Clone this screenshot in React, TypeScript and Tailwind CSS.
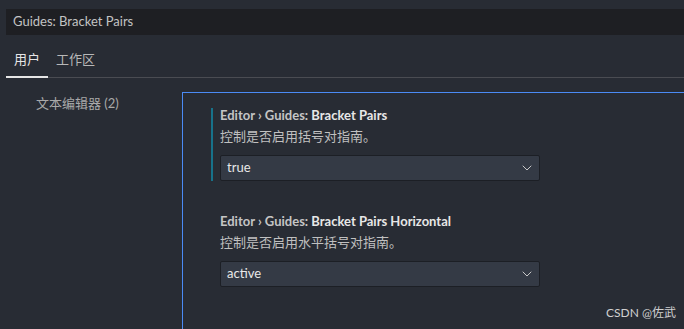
import { ChevronDown } from 'lucide-react';

const font = { fontFamily: 'Lato, "Noto Sans CJK SC", sans-serif' };

function SettingRow({
  category,
  name,
  description,
  value,
  modified,
}: {
  category: string;
  name: string;
  description: string;
  value: string;
  modified?: boolean;
}) {
  return (
    <div className={`flex ${modified ? 'border-l-2 border-[#17728a]' : 'border-l-2 border-transparent'}`}>
      <div className="pl-[7px] -mt-[2px]">
        <div className="text-[13px] leading-[18px] font-bold text-[#c5c5c5]">
          {category} › Guides: <span className="text-[#e7e7e7]">{name}</span>
        </div>
        <div className="text-[13px] leading-[18px] mt-[3px] text-[#c0c0c0]">{description}</div>
        <div className="mt-[10px] w-[320px] h-[26px] flex items-center justify-between bg-[#343a45] border border-[#1c1f25] rounded-[2px] pl-[6px] pr-[4px]">
          <span className="text-[13px] text-[#e8e8e8]">{value}</span>
          <ChevronDown className="h-4 w-4 text-[#c8c8c8]" strokeWidth={1.5} />
        </div>
      </div>
    </div>
  );
}

export default function App() {
  return (
    <div className="relative w-[684px] h-[329px] overflow-hidden bg-[#282c34]" style={font}>
      <div className="pt-[9px] pl-[6px]">
        <div className="h-[26px] bg-[#1e1f23] flex items-center pl-[7px] text-[13px] text-[#c3c3c3]">
          Guides: Bracket Pairs
        </div>
        <div className="flex mt-[15px] border-b border-[#4a4c52] text-[13px]">
          <div className="px-[8px] pb-[6px] text-[#e6e6e6] border-b-2 border-[#e6e6e6] -mb-px">用户</div>
          <div className="px-[8px] pb-[6px] text-[#b8b8b8]">工作区</div>
        </div>
      </div>
      <div className="flex mt-[14px]">
        <div className="w-[182px] shrink-0 pl-[36px] pt-[2px] text-[13px] text-[#a9a9a9]">
          文本编辑器 <span>(2)</span>
        </div>
        <div className="flex-1 border-t border-l border-[#4b8bf5] h-[260px] pl-[28px] pt-[15px]">
          <SettingRow
            category="Editor"
            name="Bracket Pairs"
            description="控制是否启用括号对指南。"
            value="true"
            modified
          />
          <div className="h-[33px]" />
          <SettingRow
            category="Editor"
            name="Bracket Pairs Horizontal"
            description="控制是否启用水平括号对指南。"
            value="active"
          />
        </div>
      </div>
      <div className="absolute right-[8px] bottom-[7px] text-[12px] text-[#d0d0d0]">CSDN @佐武</div>
    </div>
  );
}
